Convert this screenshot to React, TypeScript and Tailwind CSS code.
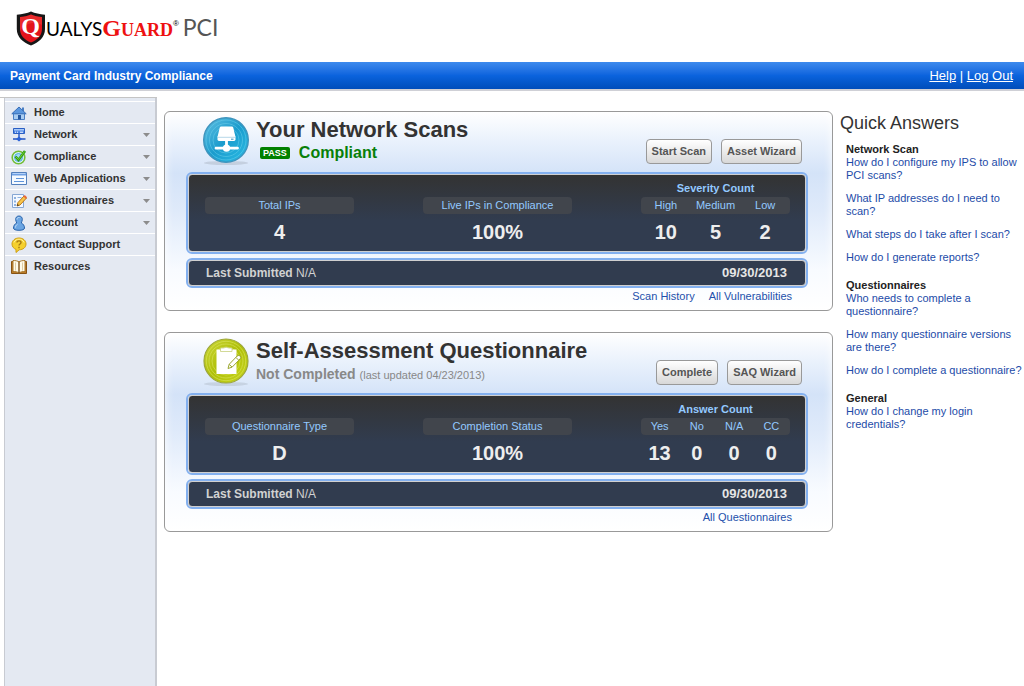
import React from 'react';

type IconName = 'home' | 'network' | 'check' | 'window' | 'form' | 'user' | 'help' | 'book';

function NavIcon({ name }: { name: IconName }) {
  return (
    <svg viewBox="0 0 16 16" className="size-4 shrink-0" aria-hidden="true">
      {name === 'home' && (
        <g>
          <path d="M11 2.500h2v4h-2z" fill="#4a7fc4" />
          <path d="M2.500 8h11v6.500h-11z" fill="#a9cdf2" stroke="#4a7fc4" />
          <path d="M8 2 15.200 8.800H.8z" fill="#5b97de" stroke="#3a6fb8" strokeLinejoin="round" />
          <path d="M7 10h3v4.500H7z" fill="#2457a0" />
        </g>
      )}
      {name === 'network' && (
        <g>
          <path d="M2.500 1.500h11v5h-11z" fill="#4c84e4" stroke="#2a5fc4" />
          <path d="M3 2h10v1.500H3z" fill="#a9caf8" />
          <path d="M4 5.200h1M6 5.200h1M9 5.200h3" stroke="#fff" />
          <path d="M8 7v4.500M2 12h12.500" stroke="#1f52c4" strokeWidth="1.400" />
          <path d="m8 9.500 3 2.500-3 2.500L5 12z" fill="#2a62d6" />
        </g>
      )}
      {name === 'check' && (
        <g>
          <circle cx="7.500" cy="8.500" r="6.300" fill="#d9f3fc" stroke="#73bd35" strokeWidth="1.600" />
          <circle cx="7.500" cy="8.500" r="4" fill="#9fdaf3" stroke="#4da9dc" />
          <path d="m4.500 7.500 3 3.500L14 2" fill="none" stroke="#2f9a14" strokeWidth="2.600" />
          <path d="m5 8 2.500 2.500L13.500 2.500" fill="none" stroke="#75d033" />
        </g>
      )}
      {name === 'window' && (
        <g>
          <path d="M.5 1.500h15v12H.5z" fill="#f5faff" stroke="#5380bd" />
          <path d="M1 2h14v2.500H1z" fill="#6fa1e4" />
          <path d="M1.500 2.500h13" stroke="#b5d2f8" />
          <path d="M5 7.500h8M3 10.500h10" stroke="#5f94da" />
        </g>
      )}
      {name === 'form' && (
        <g>
          <path d="M1.500 1.500h11v13h-11z" fill="#f3f8ff" stroke="#86a7d4" />
          <path d="M3 4h2v2H3zM3 7.500h2v2H3zM3 11h2v2H3zM6.500 4h4v1h-4z" fill="#8eb1df" />
          <path d="m6 13 1-3.500L13 3l2.500 2L9 12z" fill="#f8c64c" stroke="#b97519" />
          <path d="m12.300 3.500 2.600 2.200L16 4.200 13.700 2z" fill="#e8683c" />
          <path d="m6 13 .5-2 1.500 1.300z" fill="#333" />
        </g>
      )}
      {name === 'user' && (
        <g>
          <path
            d="M8 1C5.700 1 4.500 2.700 4.700 4.700c.1 1.600.9 2.400 1 3.300C4 8.800 2.500 10.500 2.500 13c0 1.500 2 2.300 5.500 2.300s5.500-.8 5.500-2.300c0-2.500-1.500-4.200-3.200-5 .1-.9.900-1.700 1-3.300C11.500 2.700 10.300 1 8 1z"
            fill="#6ba5e2"
            stroke="#2862aa"
          />
          <path d="M6 4.500C6 3 7 2.200 8.500 2.500M4.500 12.500c0-1.500.8-2.500 2-3.200" fill="none" stroke="#c6e0fa" />
        </g>
      )}
      {name === 'help' && (
        <g>
          <path
            d="M8 1C4 1 1 3.500 1 7c0 2.600 1.700 4.600 4 5.400V15.500l3.200-2.700C12.200 12.700 15 10.300 15 7c0-3.500-3-6-7-6z"
            fill="#f5d02d"
            stroke="#cf9f13"
          />
          <path d="M3 5.500C4 3 6 2.200 8 2.200s4 .8 5 3.300" fill="none" stroke="#fff09a" />
          <path d="M6 5.500C6 3.300 10 3.300 10 5.500 10 7 8 7 8 8.500M8 9.800v1.400" fill="none" stroke="#a67a12" strokeWidth="1.400" />
        </g>
      )}
      {name === 'book' && (
        <g>
          <path d="M.5 2.500h15v12H.5z" fill="#bd7d28" stroke="#875313" />
          <path d="M2 1.500c2.500 0 4.500.3 6 1.500 1.500-1.200 3.500-1.500 6-1.500v11c-2.500 0-4.500.3-6 1.500-1.500-1.200-3.500-1.500-6-1.500z" fill="#fffbe9" stroke="#a9792e" />
          <path d="M8 3v11" stroke="#7e5117" strokeWidth="1.400" />
          <path d="M4.500 3.500v8M11.500 3.500v8" stroke="#dfcca2" />
        </g>
      )}
    </svg>
  );
}

function ShieldLogo() {
  return (
    <svg viewBox="0 0 30 35" className="h-[35px] w-[30px]" aria-hidden="true">
      <path d="M15 .5c4 1.800 8.500 2.800 14 3.200V18c0 8-6 13.500-14 16.500C7 31.500.8 26 .8 18V3.700C6.500 3.300 11 2.300 15 .5z" fill="#171717" />
      <path d="M15 3.400c3.500 1.500 7 2.300 11 2.600v12c0 6.500-4.500 11-11 13.600C8.500 29 4 24.500 4 18V6c4-.3 7.500-1.100 11-2.600z" fill="#e3141b" />
      <path d="M15 3.400c3.500 1.500 7 2.300 11 2.600v8C18 10 10 12 4 20V6c4-.3 7.500-1.100 11-2.600z" fill="#f34a43" opacity=".4" />
      <text x="14.500" y="23" textAnchor="middle" fontFamily="Liberation Serif, serif" fontSize="24" fontWeight="700" fill="#fff">Q</text>
    </svg>
  );
}

function ScanBadge() {
  return (
    <svg viewBox="0 0 48 50" className="h-[50px] w-12 shrink-0" aria-hidden="true">
      <defs>
        <linearGradient id="scanFill" x1="0" y1="0" x2="1" y2="1">
          <stop offset="0" stopColor="#62bfe2" />
          <stop offset=".5" stopColor="#1b9ccd" />
          <stop offset="1" stopColor="#29bde6" />
        </linearGradient>
      </defs>
      <ellipse cx="24" cy="47" rx="22" ry="2" fill="#7f8792" opacity=".25" />
      <circle cx="24" cy="24" r="22.300" fill="url(#scanFill)" stroke="#3f94bd" strokeWidth="1.400" />
      <g fill="none" stroke="#74d5f0" opacity=".45">
        <circle cx="24" cy="24" r="20" />
        <circle cx="24" cy="24" r="16.500" />
        <circle cx="24" cy="24" r="13" />
      </g>
      <path d="M19.300 10.500h10.400q1.300 0 1.600 1.300L33.500 21h-18l2.200-9.200q.3-1.300 1.600-1.300z" fill="#fff" />
      <path d="M15.500 20.500h18v2.800q0 1.700-1.500 1.700H17q-1.500 0-1.500-1.700z" fill="#fff" />
      <path d="M16 21.300h17" stroke="#a3cde2" strokeWidth=".8" />
      <path d="M29 23.200h2.500" stroke="#2386b2" strokeWidth=".9" />
      <path d="M24.500 25v6M14 32.200h21.500" stroke="#fff" strokeWidth="2.800" strokeLinecap="round" />
      <circle cx="24.500" cy="32.200" r="3.600" fill="#fff" />
    </svg>
  );
}

function FormBadge() {
  return (
    <svg viewBox="0 0 48 50" className="h-[50px] w-12 shrink-0" aria-hidden="true">
      <defs>
        <linearGradient id="formFill" x1="0" y1="0" x2="1" y2="1">
          <stop offset="0" stopColor="#cbd738" />
          <stop offset=".5" stopColor="#afbf08" />
          <stop offset="1" stopColor="#c9d71c" />
        </linearGradient>
      </defs>
      <ellipse cx="24" cy="47" rx="22" ry="2" fill="#7f8792" opacity=".22" />
      <circle cx="24" cy="24" r="22" fill="url(#formFill)" stroke="#9ca63c" strokeWidth="1.200" />
      <g fill="none" stroke="#e2ea70" opacity=".5">
        <circle cx="24" cy="24" r="19.700" />
        <circle cx="24" cy="24" r="17" />
        <circle cx="24" cy="24" r="14" />
      </g>
      <path d="M14.500 12.500h20v24.500h-20z" fill="#fff" />
      <path d="M18.500 14.500V11h3q2.500-1.500 5.500 0h3v3.500z" fill="#fff" stroke="#c6cf7c" strokeWidth=".8" />
      <path d="m26 31.500 1.200-4.200 8-8.300q1.800-1.300 3 0 1.200 1.300 0 2.800l-8 8.300z" fill="#fff" stroke="#9aa62c" />
      <path d="m34 20.500 2.900 2.900M27.200 27.300l2.800 2.800" stroke="#9aa62c" />
    </svg>
  );
}

const navItems: { label: string; icon: IconName; menu?: boolean }[] = [
  { label: 'Home', icon: 'home' },
  { label: 'Network', icon: 'network', menu: true },
  { label: 'Compliance', icon: 'check', menu: true },
  { label: 'Web Applications', icon: 'window', menu: true },
  { label: 'Questionnaires', icon: 'form', menu: true },
  { label: 'Account', icon: 'user', menu: true },
  { label: 'Contact Support', icon: 'help' },
  { label: 'Resources', icon: 'book' },
];

type StatGroup = { title?: string; stats: [string, string][] };

function StatTable({ title, stats }: StatGroup) {
  return (
    <table className="w-[149px] table-fixed border-separate border-spacing-0 text-center">
      {title && <caption className="h-[22px] pt-1 text-[11px] leading-[18px] font-bold text-[#93c9ff]">{title}</caption>}
      <thead>
        <tr>
          {stats.map(([label]) => (
            <th
              key={label}
              scope="col"
              className="h-[17px] bg-[#41454c] p-0 text-[11px] leading-[17px] font-normal whitespace-nowrap text-[#93c9ff] first:rounded-l-sm last:rounded-r-sm"
            >
              {label}
            </th>
          ))}
        </tr>
      </thead>
      <tbody>
        <tr>
          {stats.map(([label, value]) => (
            <td key={label} className="h-[37px] p-0 text-xl leading-[37px] font-bold text-[#eeeeee]">
              {value}
            </td>
          ))}
        </tr>
      </tbody>
    </table>
  );
}

type CardProps = {
  badge: React.ReactNode;
  title: string;
  status: React.ReactNode;
  actions: string[];
  groups: StatGroup[];
  links: string[];
};

function SummaryCard({ badge, title, status, actions, groups, links }: CardProps) {
  return (
    <section className="rounded-md border border-[#999999] bg-[linear-gradient(to_bottom,#ffffff_0%,#e9f1fc_15%,#d4e3f8_31%,#dfeafa_50%,#f8fbff_80%,#ffffff_100%)] pr-6 pl-[21px] shadow-[inset_0_0_10px_#ffffff]">
      <div className="flex h-[60px] items-start pr-[6px] pl-4">
        <div className="pt-1">{badge}</div>
        <div className="ml-[6px] flex-1 pt-[5px]">
          <h2 className="text-[22px] leading-[26px] font-bold text-[#333333]">{title}</h2>
          <div className="flex h-5 items-center">{status}</div>
        </div>
        <div className="flex gap-[9px] pt-[27px]">
          {actions.map((label) => (
            <button
              key={label}
              type="button"
              className="h-[25px] rounded-[4px] border border-[#999999] bg-linear-to-b from-white to-[#d8d8d8] px-[5px] text-[11px] font-bold text-[#555555]"
            >
              {label}
            </button>
          ))}
        </div>
      </div>
      <div className="rounded-md border-2 border-[#83b0ef]">
        <div className="flex items-end justify-between rounded-[4px] border border-[#d0d0d0] bg-linear-to-b from-[#333333] to-[#313c4f] to-60% pr-[15px] pl-4">
          {groups.map((group) => (
            <StatTable key={group.stats[0][0]} {...group} />
          ))}
        </div>
      </div>
      <div className="mt-1 rounded-md border-2 border-[#83b0ef]">
        <div className="flex h-[26px] items-center justify-between rounded-[4px] border border-[#d0d0d0] bg-[#313c4f] pr-[18px] pl-[17px] text-xs text-[#d2d2d2]">
          <p>
            <b>Last Submitted</b> N/A
          </p>
          <time dateTime="2013-09-30" className="text-[13px] font-bold text-[#e6e6e6]">
            09/30/2013
          </time>
        </div>
      </div>
      <div className="flex h-[22px] justify-end gap-[14px] pr-4 text-[11px] leading-[17px] text-[#2350ab]">
        {links.map((label) => (
          <a key={label} href="#">
            {label}
          </a>
        ))}
      </div>
    </section>
  );
}

const quickAnswers = [
  {
    heading: 'Network Scan',
    questions: [
      'How do I configure my IPS to allow PCI scans?',
      'What IP addresses do I need to scan?',
      'What steps do I take after I scan?',
      'How do I generate reports?',
    ],
  },
  {
    heading: 'Questionnaires',
    questions: [
      'Who needs to complete a questionnaire?',
      'How many questionnaire versions are there?',
      'How do I complete a questionnaire?',
    ],
  },
  { heading: 'General', questions: ['How do I change my login credentials?'] },
];

export default function App() {
  return (
    <div className="flex min-h-screen flex-col bg-white font-['Liberation_Sans',Arial,sans-serif] text-[#333333]">
      <header>
        <div className="flex h-[62px] items-start pt-[11px] pl-4">
          <ShieldLogo />
          <div className="flex items-baseline pt-1 text-black">
            <span className="font-[Lato,sans-serif] text-[19px] leading-6">UALYS</span>
            <span className="font-['Liberation_Serif',serif] text-[18px] leading-6 font-bold text-[#ee1111]">
              <span className="text-[24px]">G</span>UARD
            </span>
            <span className="self-start pt-1 text-[8px] leading-[10px]">®</span>
            <span className="ml-1 font-[Lato,sans-serif] text-[23px] leading-6 text-[#555555]">PCI</span>
          </div>
        </div>
        <div className="flex h-[29px] items-center justify-between border-b-2 border-[#cfd0d6] bg-linear-to-b from-[#3d8aed] via-[#0b63dd] to-[#004dba] bg-clip-padding pr-[11px] pl-[10px] text-white">
          <h1 className="text-xs font-bold">Payment Card Industry Compliance</h1>
          <div className="text-[13px]">
            <a href="#" className="underline">Help</a> | <a href="#" className="underline">Log Out</a>
          </div>
        </div>
      </header>

      <div className="flex flex-1">
        <div className="mt-[6px] flex w-[157px] shrink-0 border-t border-[#c4c4c4] pl-1">
          <nav className="flex-1 border-r-2 border-l border-[#c8cbd2] bg-[#e4e9f2] pt-[3px]">
            <ul>
              {navItems.map(({ label, icon, menu }) => (
                <li key={label} className="border-t border-white">
                  <a href="#" className="flex h-[21px] items-center pr-[5px] pl-[6px] text-[11px] font-bold">
                    <NavIcon name={icon} />
                    <span className="ml-[7px] flex-1">{label}</span>
                    {menu && (
                      <svg viewBox="0 0 7 4" className="h-1 w-[7px]" aria-hidden="true">
                        <path d="M0 0h7L3.500 4z" fill="#8c8c8c" />
                      </svg>
                    )}
                  </a>
                </li>
              ))}
            </ul>
          </nav>
        </div>

        <main className="ml-[7px] flex min-w-0 flex-1 flex-col gap-[21px] pt-5">
          <SummaryCard
            badge={<ScanBadge />}
            title="Your Network Scans"
            status={
              <>
                <span className="ml-1 rounded-xs bg-[#008000] px-[3px] text-[9px] leading-3 font-bold text-white">PASS</span>
                <span className="ml-[9px] text-base leading-5 font-bold text-[#087f08]">Compliant</span>
              </>
            }
            actions={['Start Scan', 'Asset Wizard']}
            groups={[
              { stats: [['Total IPs', '4']] },
              { stats: [['Live IPs in Compliance', '100%']] },
              { title: 'Severity Count', stats: [['High', '10'], ['Medium', '5'], ['Low', '2']] },
            ]}
            links={['Scan History', 'All Vulnerabilities']}
          />
          <SummaryCard
            badge={<FormBadge />}
            title="Self-Assessment Questionnaire"
            status={
              <span className="text-[11px] leading-5 text-[#888888]">
                <b className="mr-px text-sm leading-5">Not Completed</b> (last updated 04/23/2013)
              </span>
            }
            actions={['Complete', 'SAQ Wizard']}
            groups={[
              { stats: [['Questionnaire Type', 'D']] },
              { stats: [['Completion Status', '100%']] },
              { title: 'Answer Count', stats: [['Yes', '13'], ['No', '0'], ['N/A', '0'], ['CC', '0']] },
            ]}
            links={['All Questionnaires']}
          />
        </main>

        <aside className="w-[191px] shrink-0 pt-5 pl-[7px]">
          <h2 className="text-lg leading-6">Quick Answers</h2>
          <div className="mt-2 flex flex-col gap-[15px] pl-[6px] text-[11px] leading-[13px]">
            {quickAnswers.map(({ heading, questions }) => (
              <section key={heading}>
                <h3 className="font-bold text-[#222222]">{heading}</h3>
                <ul className="flex flex-col gap-[10px] text-[#1d4ba8]">
                  {questions.map((question) => (
                    <li key={question}>
                      <a href="#">{question}</a>
                    </li>
                  ))}
                </ul>
              </section>
            ))}
          </div>
        </aside>
      </div>
    </div>
  );
}
